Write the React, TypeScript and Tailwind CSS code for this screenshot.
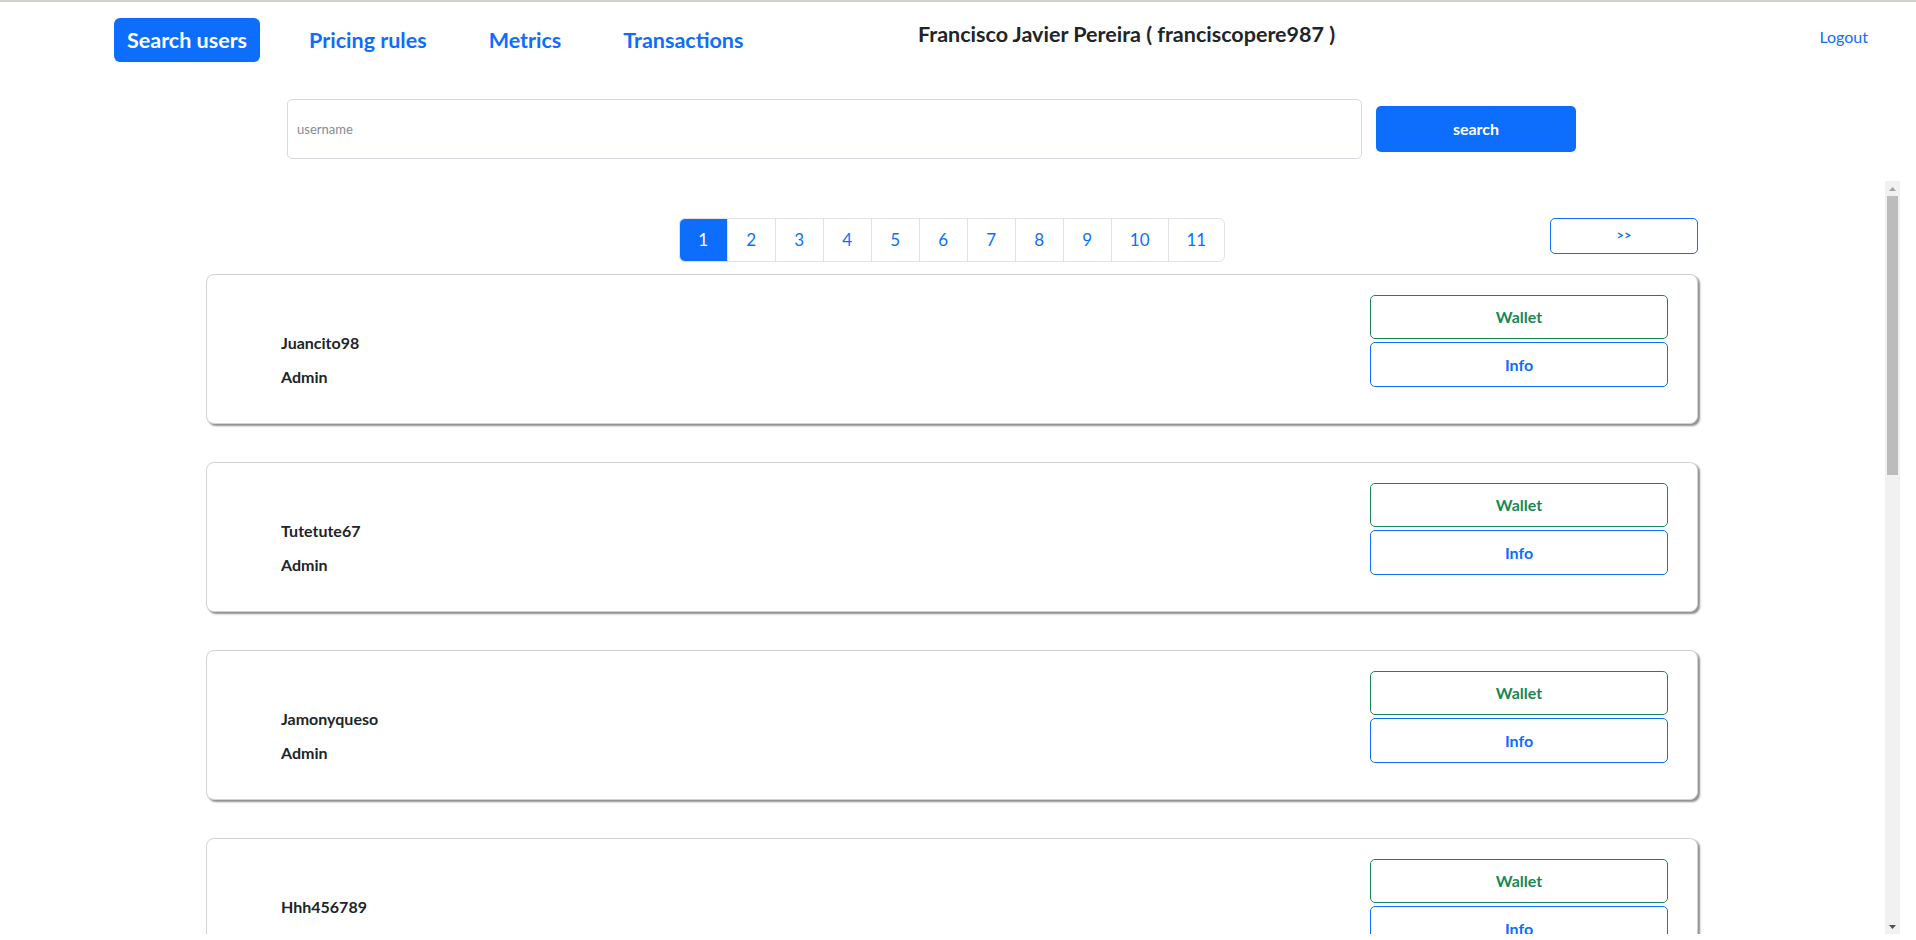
import React from "react";

const users = [
  { name: "Juancito98", role: "Admin" },
  { name: "Tutetute67", role: "Admin" },
  { name: "Jamonyqueso", role: "Admin" },
  { name: "Hhh456789", role: "Admin" },
  { name: "Pepito22", role: "User" },
  { name: "Lauramg", role: "User" },
  { name: "Carlos_88", role: "User" },
  { name: "Mariaa01", role: "User" },
  { name: "Sergiorod", role: "User" },
  { name: "Anita33", role: "User" },
];

const pages = [1, 2, 3, 4, 5, 6, 7, 8, 9, 10, 11];

function UserCard({ name, role }: { name: string; role: string }) {
  return (
    <div className="flex h-[150px] shrink-0 items-start justify-between rounded-[8px] border border-[#d2d2d2] bg-white shadow-[2px_2px_2px_#8f8f8f]">
      <div className="flex flex-col gap-[10px] pl-[74px] pt-[56px] text-[16px] font-bold leading-[24px] text-[#212529]">
        <span>{name}</span>
        <span>{role}</span>
      </div>
      <div className="flex flex-col gap-[3px] pr-[29px] pt-[20px]">
        <button className="h-[44px] w-[298px] rounded-[5px] border border-[#198754] text-[16px] font-bold text-[#198754]">
          Wallet
        </button>
        <button className="h-[45px] w-[298px] rounded-[5px] border border-[#0d6efd] text-[16px] font-bold text-[#0d6efd]">
          Info
        </button>
      </div>
    </div>
  );
}

// classic-style scrollbar drawing
function ScrollBar() {
  return (
    <div className="flex w-[15px] shrink-0 flex-col bg-[#f1f1f1]">
      <div className="flex h-[15px] items-center justify-center">
        <svg width="7" height="4" viewBox="0 0 7 4">
          <path d="M0 4 L3.5 0 L7 4 Z" fill="#a3a3a3" />
        </svg>
      </div>
      <div className="mx-[2px] h-[279px] bg-[#bcbcbc]" />
      <div className="flex-1" />
      <div className="flex h-[15px] items-center justify-center">
        <svg width="7" height="4" viewBox="0 0 7 4">
          <path d="M0 0 L7 0 L3.5 4 Z" fill="#505050" />
        </svg>
      </div>
    </div>
  );
}

export default function App() {
  return (
    <div className="h-[940px] overflow-hidden border-t-2 border-[#d3cfcb] bg-white font-['Lato',sans-serif] text-[#212529]">
      {/* Header */}
      <div className="flex items-start pl-[114px] pr-[48px]">
        <nav className="mt-[16px] flex w-[804px] items-center gap-[36px] text-[21.5px] font-bold">
          <button className="h-[44px] rounded-[6px] bg-[#0d6efd] px-[13px] text-white">
            Search users
          </button>
          <a className="px-[13px] text-[#0d6efd]">Pricing rules</a>
          <a className="px-[13px] text-[#0d6efd]">Metrics</a>
          <a className="px-[13px] text-[#0d6efd]">Transactions</a>
        </nav>
        <h1 className="mt-[18px] text-[21.5px] font-bold leading-[28px]">
          Francisco Javier Pereira ( franciscopere987 )
        </h1>
        <div className="flex-1" />
        <a className="mt-[23px] text-[16px] leading-[24px] text-[#0d6efd]">Logout</a>
      </div>

      {/* Search */}
      <div className="mt-[37px] flex items-center gap-[14px] pl-[287px]">
        <input
          className="h-[60px] w-[1075px] rounded-[5px] border border-[#d6dadf] px-[9px] text-[13px] outline-none placeholder:text-[#858c93]"
          placeholder="username"
        />
        <button className="h-[46px] w-[200px] rounded-[5px] bg-[#0d6efd] text-[16px] font-bold text-white">
          search
        </button>
      </div>

      {/* Results */}
      <div className="ml-[16px] mt-[22px] flex h-[753px] w-[1884px]">
        <div className="flex-1 overflow-hidden">
          <div className="ml-[190px] w-[1492px] pb-[47px] pt-[37px]">
            <div className="grid grid-cols-[1fr_auto_1fr] items-start">
              <div />
              <div className="flex h-[44px] text-[17px] text-[#0d6efd]">
                {pages.map((p, i) => (
                  <span
                    key={p}
                    className={
                      "flex min-w-[49px] items-center justify-center border border-[#dee2e6] px-[18px] " +
                      (i === 0
                        ? "rounded-l-[6px] border-[#0d6efd] bg-[#0d6efd] text-white"
                        : "-ml-px") +
                      (i === pages.length - 1 ? " rounded-r-[6px]" : "")
                    }
                  >
                    {p}
                  </span>
                ))}
              </div>
              <button className="h-[36px] w-[148px] justify-self-end rounded-[5px] border border-[#0d6efd] text-[13px] font-bold text-[#0d6efd]">
                &gt;&gt;
              </button>
            </div>
            <div className="mt-[12px] flex flex-col gap-[38px]">
              {users.map((u) => (
                <UserCard key={u.name} name={u.name} role={u.role} />
              ))}
            </div>
          </div>
        </div>
        <ScrollBar />
      </div>
    </div>
  );
}
